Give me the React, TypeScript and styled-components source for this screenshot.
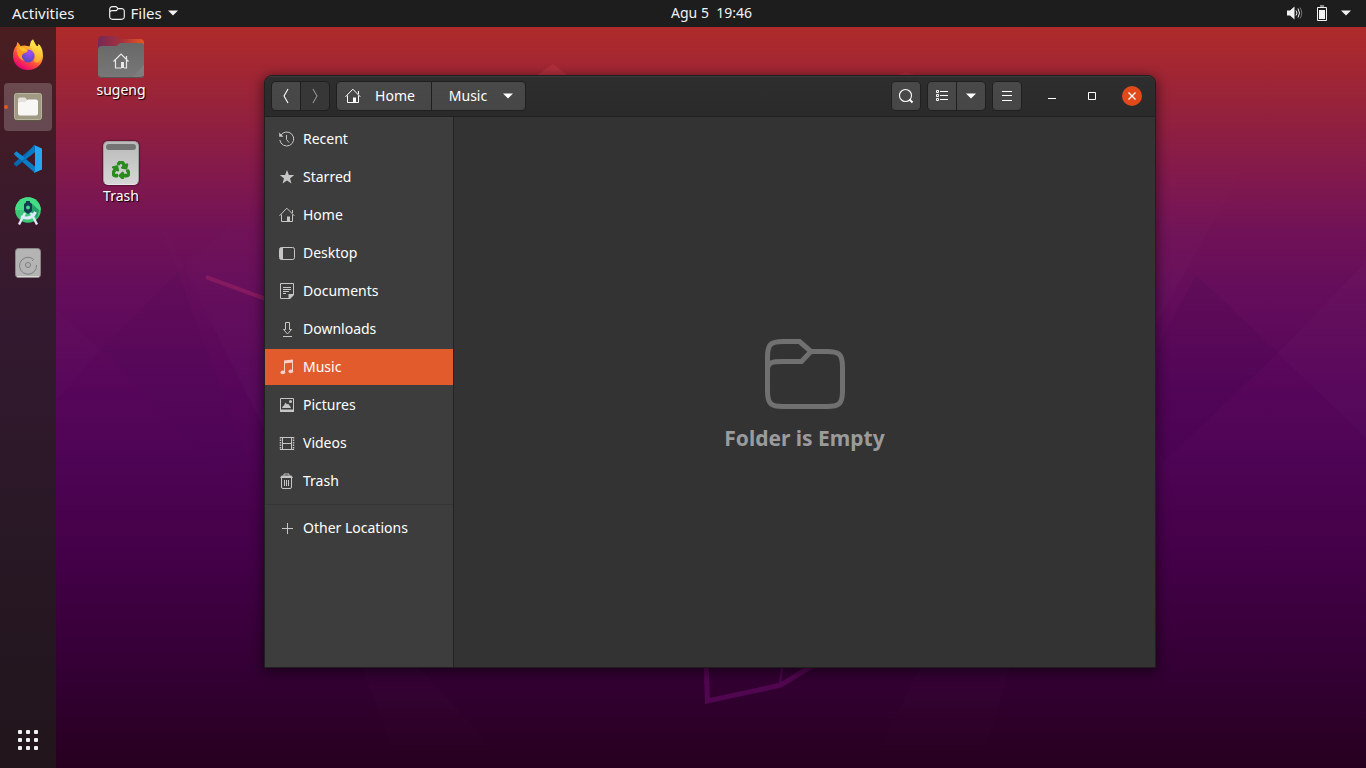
import React from 'react';
import styled, { createGlobalStyle, css } from 'styled-components';
import { FaRecycle } from 'react-icons/fa';

const GlobalStyle = createGlobalStyle`
  *, *::before, *::after { box-sizing: border-box; }
  body {
    margin: 0;
    font: 14px/20px "Noto Sans", "Open Sans", sans-serif;
    color: #fff;
    background: #2c001e;
  }
  button { font: inherit; color: inherit; border: 0; padding: 0; background: none; }
  ul { list-style: none; margin: 0; padding: 0; }
  a { color: inherit; text-decoration: none; }
  svg { display: block; flex: none; }
`;

const Screen = styled.div`
  position: relative;
  isolation: isolate;
  min-height: 100vh;
  display: flex;
  flex-direction: column;
`;

const WallpaperArt = styled.svg`
  position: absolute;
  inset: 0;
  width: 100%;
  height: 100%;
  z-index: -1;
`;

const TopBar = styled.header`
  display: grid;
  grid-template-columns: 1fr auto 1fr;
  align-items: center;
  height: 27px;
  padding: 0 15px 1px 12px;
  background: #1d1d1d;
  color: #f2f2f2;
`;

const BarGroup = styled.div<{ $end?: boolean }>`
  display: flex;
  align-items: center;
  gap: ${(p) => (p.$end ? '14px' : '34px')};
  justify-content: ${(p) => (p.$end ? 'flex-end' : 'flex-start')};
  font-size: 15px;
`;

const BarButton = styled.button`
  display: flex;
  align-items: center;
  gap: 6px;
`;

const Clock = styled(BarButton)`
  margin-left: 60px;
  white-space: pre;
`;

const Workspace = styled.div`
  flex: 1;
  display: flex;
`;

const Dock = styled.nav`
  display: flex;
  flex-direction: column;
  justify-content: space-between;
  flex: none;
  width: 56px;
  padding: 4px;
  background: linear-gradient(#4a1e20 0%, #3c1a2a 22%, #33192f 40%, #261723 75%, #21151b 100%);
`;

const DockList = styled.ul`
  display: flex;
  flex-direction: column;
  gap: 4px;
`;

const DockButton = styled.button<{ $active?: boolean }>`
  position: relative;
  display: grid;
  place-items: center;
  width: 48px;
  height: 48px;
  border-radius: 4px;
  background: ${(p) => (p.$active ? 'rgba(255, 255, 255, 0.2)' : 'transparent')};
`;

const RunningDot = styled.span`
  position: absolute;
  left: 0;
  top: 22px;
  width: 4px;
  height: 4px;
  border-radius: 50%;
  background: #e95420;
`;

const DesktopIcons = styled.ul`
  flex: none;
  width: 130px;
  padding-top: 6px;
`;

const DesktopItem = styled.li`
  display: flex;
  justify-content: center;
  align-items: flex-start;
  height: 106px;
`;

const DesktopButton = styled.button`
  display: flex;
  flex-direction: column;
  align-items: center;
  gap: 1px;
  text-shadow: 1px 1px 1px #000;
`;

const Window = styled.main`
  flex: 1;
  display: flex;
  flex-direction: column;
  min-width: 700px;
  margin: 48px 210px 100px 78px;
  border: 1px solid #1f1f1f;
  border-radius: 8px 8px 0 0;
  overflow: hidden;
  background: #333;
  box-shadow: 0 3px 12px 2px rgba(0, 0, 0, 0.45);
`;

const HeaderBar = styled.div`
  display: flex;
  align-items: center;
  height: 41px;
  padding: 0 13px 0 6px;
  border-bottom: 1px solid #202020;
  background: linear-gradient(#2e2e2e, #2a2a2a);
  box-shadow: inset 0 1px #3b3b3b;
`;

const Spacer = styled.div`
  flex: 1;
`;

const ButtonGroup = styled.div<{ $after?: number }>`
  display: flex;
  gap: 1px;
  height: 30px;
  margin-right: ${(p) => p.$after ?? 6}px;
  border: 1px solid #1f1f1f;
  border-radius: 5px;
  overflow: hidden;
  background: #1f1f1f;
`;

const ToolButton = styled.button`
  display: flex;
  align-items: center;
  justify-content: center;
  width: 28px;
  background: linear-gradient(#494949, #464646);
  &:disabled { background: #373737; color: #929292; }
`;

const PathButton = styled(ToolButton)<{ $current?: boolean }>`
  width: ${(p) => (p.$current ? '93px' : '94px')};
  gap: ${(p) => (p.$current ? '16px' : '14px')};
  ${(p) =>
    p.$current
      ? css`
          padding-left: 5px;
        `
      : css`
          padding-right: 8px;
        `}
`;

const WindowControl = styled.button<{ $close?: boolean }>`
  display: grid;
  place-items: center;
  width: 20px;
  height: 20px;
  margin-left: 20px;
  border-radius: 50%;
  background: ${(p) => (p.$close ? '#e2491a' : 'transparent')};
`;

const WindowBody = styled.div`
  flex: 1;
  display: flex;
`;

const Sidebar = styled.nav`
  flex: none;
  width: 189px;
  padding-top: 4px;
  border-right: 1px solid #232323;
  background: #3d3d3d;
`;

const Place = styled.a<{ $selected?: boolean }>`
  display: flex;
  align-items: center;
  gap: 8px;
  height: 36px;
  margin-bottom: 2px;
  padding-left: 14px;
  background: ${(p) => (p.$selected ? '#e25b2c' : 'transparent')};
  svg { color: ${(p) => (p.$selected ? '#f8d3c6' : '#c6c6c6')}; }
`;

const Divider = styled.hr`
  height: 1px;
  margin: 5px 0;
  border: 0;
  background: #353535;
`;

const EmptyState = styled.section`
  flex: 1;
  display: flex;
  flex-direction: column;
  align-items: center;
  justify-content: center;
  gap: 12px;
  padding-top: 8px;
  color: #707070;
`;

const EmptyTitle = styled.h1`
  margin: 0;
  font-size: 21px;
  line-height: 32px;
  font-weight: 700;
  color: #9b9b9b;
`;

/* ---------- symbolic icons, on a 16 unit grid ---------- */

const Glyph = ({ children }: { children: React.ReactNode }) => (
  <svg width="16" height="16" viewBox="0 0 16 16" fill="none" stroke="currentColor" aria-hidden="true">
    {children}
  </svg>
);

const FolderOutline = ({ width, height, stroke = 5 }: { width: number; height: number; stroke?: number }) => (
  <svg width={width} height={height} viewBox="0 0 80 72" fill="none" stroke="currentColor" strokeWidth={stroke} aria-hidden="true">
    <path d="M46 13.5H62C74 13.5 77.5 16 77.5 29V53C77.5 66 74 68.5 62 68.5H18C6 68.5 2.5 66 2.5 53V19C2.5 6 6 3.5 18 3.5H34.5L46 13.5L36.5 23.5H18C8 23.5 2.5 24 2.5 32" />
  </svg>
);

const Caret = () => (
  <svg width="10" height="6" viewBox="0 0 10 6" fill="currentColor" aria-hidden="true">
    <path d="M0 .5h10L5 5.5z" />
  </svg>
);

const HomeGlyph = () => (
  <Glyph>
    <path d="M.5 8.8L7.8 1.2L15.3 8.8M2.5 7.5V14.5H8M10.5 14.5H13.5V7.5M13.5 6V3" />
    <path d="M8 9.5h3V15H8z" fill="currentColor" stroke="none" />
  </Glyph>
);

const RecentGlyph = () => (
  <Glyph>
    <path d="M1.6 4.6A7 7 0 1 1 .8 9M7.5 4v4.5l2.5 3" />
    <path d="M.2 1.5v4.3h4.3z" fill="currentColor" stroke="none" />
  </Glyph>
);

const StarGlyph = () => (
  <Glyph>
    <path
      d="M8 1l1.9 4.900 5.300.2-4.200 3.300 1.500 5.200L8 11.600l-4.500 3 1.500-5.200L.8 6.100l5.300-.2z"
      fill="currentColor"
      stroke="none"
    />
  </Glyph>
);

const DesktopGlyph = () => (
  <Glyph>
    <rect x=".5" y="2.5" width="15" height="12" rx="1.8" />
    <path d="M1 3h3v11H1z" fill="currentColor" stroke="none" />
  </Glyph>
);

const DocumentGlyph = () => (
  <Glyph>
    <path d="M14.5 11V.5h-13v15H10M4 4.5h8M4 6.5h8M4 8.5h6M4 10.5h3" />
    <path d="M9.5 16v-5H15v1l-4 4z" fill="currentColor" stroke="none" />
  </Glyph>
);

const DownloadGlyph = () => (
  <Glyph>
    <path d="M6.5 1.5h4v7h2L8.5 13l-4-4.5h2zM4 15.5h9" />
  </Glyph>
);

const MusicGlyph = () => (
  <Glyph>
    <path d="M5.5 13V2.5M13.5 12V2" />
    <path d="M5 1.5L14 .5v3L5 4.5z" fill="currentColor" stroke="none" />
    <ellipse cx="3.8" cy="13.3" rx="2.3" ry="1.9" fill="currentColor" stroke="none" />
    <ellipse cx="11.8" cy="12.3" rx="2.3" ry="1.9" fill="currentColor" stroke="none" />
  </Glyph>
);

const PictureGlyph = () => (
  <Glyph>
    <path d="M1.5 1.5h13v12.5h-13z" />
    <path d="M1 12.5h14V15H1zM3 11l1-2 1-.5L6.5 5.5 8 7.5l1-.8L11 9l1 2z" fill="currentColor" stroke="none" />
    <circle cx="11.5" cy="4.5" r="1.5" fill="currentColor" stroke="none" />
  </Glyph>
);

const VideoGlyph = () => (
  <Glyph>
    <path d="M3.5 2v13M12.5 2v13M1 2.5h14M3 8.5h10M1 14.5h14" />
    <path d="M1.5 2v13M14.5 2v13" strokeDasharray="1.5 1" strokeWidth="1.5" />
  </Glyph>
);

const TrashGlyph = () => (
  <Glyph>
    <path d="M2.5 4.5V14q0 1.5 1.5 1.5h7q1.5 0 1.5-1.5V4.5M5.5 7v6M7.5 7v6M9.5 7v6M5 2.5V1h5v1.5" />
    <path d="M1 5l1.5-2.5h10L14 5z" fill="currentColor" stroke="none" />
  </Glyph>
);

const PlusGlyph = () => (
  <Glyph>
    <path d="M3 8.5h11M8.5 3v11" />
  </Glyph>
);

const ChevronGlyph = ({ right }: { right?: boolean }) => (
  <Glyph>
    <path d={right ? 'M6 1l4 7-4 7' : 'M10 1L6 8l4 7'} strokeWidth="1.1" />
  </Glyph>
);

const SearchGlyph = () => (
  <Glyph>
    <circle cx="7.5" cy="7.5" r="6" strokeWidth="1.1" />
    <path d="M11.5 11.5l3 3" strokeWidth="2" />
  </Glyph>
);

const ListGlyph = () => (
  <Glyph>
    <path d="M2.5 2.5h2v2h-2zM2.5 6.5h2v2h-2zM2.5 10.5h2v2h-2zM6 3.5h8M6 7.5h8M6 11.5h8" />
  </Glyph>
);

const MenuGlyph = () => (
  <Glyph>
    <path d="M3 3.5h10M3 7.5h10M3 12.5h10" />
  </Glyph>
);

const VolumeIcon = () => (
  <Glyph>
    <path d="M0 5.5h3L7.5 1.5v13L3 10.5H0z" fill="currentColor" stroke="none" />
    <path d="M9 5.5q2 2.5 0 5M11 3.5q3 4.5 0 9" />
    <path d="M13 2.5q3.5 5.5 0 11" opacity=".4" />
  </Glyph>
);

const BatteryIcon = () => (
  <svg width="10" height="16" viewBox="0 0 10 16" fill="none" stroke="currentColor" aria-hidden="true">
    <path d="M.5 2.5h9v13h-9zM3 1h4" />
    <path d="M2 5h6v9H2z" fill="currentColor" stroke="none" />
  </svg>
);

/* ---------- application icons ---------- */

const FirefoxIcon = () => (
  <svg width="32" height="32" viewBox="0 0 32 32" aria-hidden="true">
    <defs>
      <linearGradient id="ffBody" x1=".8" y1=".1" x2=".25" y2=".95">
        <stop offset="0" stopColor="#fff44f" />
        <stop offset=".35" stopColor="#ffa52b" />
        <stop offset=".65" stopColor="#ff4a3d" />
        <stop offset="1" stopColor="#e60078" />
      </linearGradient>
      <radialGradient id="ffGlobe" cx=".6" cy=".25" r=".8">
        <stop offset="0" stopColor="#a44cf5" />
        <stop offset="1" stopColor="#4b4bbd" />
      </radialGradient>
      <linearGradient id="ffTail" x1="0" y1="0" x2="0" y2="1">
        <stop offset="0" stopColor="#fff04a" />
        <stop offset="1" stopColor="#ffb52e" />
      </linearGradient>
    </defs>
    <path
      d="M4.5 6.5L5.5 3l3 4 4-.5 5 1 1.5-5.5L21 1l3 5.5 2 1 .5-2.5C30 8 31 12.5 31 17c0 8-6.5 14-15 14S1 25 1 17c0-4 1-8 3.5-10.5z"
      fill="url(#ffBody)"
    />
    <path d="M18 8l1.5-6L21 0l3 6.5 2 1 .5-2.5C31 10 31 18 28 22c-2 2.5-5 2-6 0 2-5 1-9-4-14z" fill="url(#ffTail)" opacity=".75" />
    <circle cx="16" cy="17" r="6.5" fill="url(#ffGlobe)" />
    <path d="M4.5 8L6 4l3 4c3-1 4 1 6 2l1 2c-1 2-3 1.5-5 3-2 2-1 5 2 7-5-1-8-5-8-10z" fill="#ff9a22" />
    <path d="M7 8.5c4-1.5 6 .5 8.5 2.5-1 2-3 1-5 1.5z" fill="#ffbf2f" />
  </svg>
);

const FilesIcon = () => (
  <svg width="30" height="30" viewBox="0 0 30 30" aria-hidden="true">
    <rect x=".5" y=".5" width="29" height="29" rx="3" fill="#5d5348" />
    <rect x="1.5" y="1.5" width="27" height="26" rx="2" fill="#a09a85" stroke="#b9b49f" />
    <path d="M5 11V7.5Q5 5.5 7 5.5h5l3 3h5V14H5z" fill="#e3e0d9" />
    <path d="M5 12q0-2 2-2h5.500l2.500-2.500h8q2 0 2 2v12q0 2-2 2H7q-2 0-2-2z" fill="#f8f7f5" />
  </svg>
);

const CodeIcon = () => (
  <svg width="30" height="30" viewBox="0 0 30 30" aria-hidden="true">
    <path d="M1 9.5L3.5 7.5 22 22.5V29L1.5 11z" fill="#0b7dc4" />
    <path d="M1 20.5L3.5 22.5 22 8V1L1 19z" fill="#0668ae" />
    <path d="M1 9.5l2.5-2L12 14l-3 3z" fill="#1389d4" />
    <path d="M9 17L21 1l1 7-9 7z" fill="#0a79c1" />
    <path d="M21 1l8 3.5v21L21 29l1-2V3z" fill="#25a5f4" />
  </svg>
);

const StudioIcon = () => (
  <svg width="28" height="30" viewBox="0 0 28 30" aria-hidden="true">
    <circle cx="14" cy="14" r="12.8" fill="#3cc877" />
    <path d="M1.2 14A12.8 12.8 0 0 1 26.8 14z" fill="#45dc86" />
    <path d="M17 7l8 7-2 8-7-7z" fill="#259c67" />
    <path d="M11 17L5 28.5M17 17L23 28.5" stroke="#dfe9fb" strokeWidth="2.4" fill="none" />
    <path d="M7 20.5Q17 25 21.5 16" stroke="#dfe9fb" strokeWidth="3" fill="none" />
    <path d="M12 5h4v1.5l2 1.5v7l-4 3-4-3V8l2-1.5z" fill="#123c52" />
    <circle cx="14" cy="11.5" r="1.9" fill="#45dc86" />
  </svg>
);

const DiskIcon = () => (
  <svg width="26" height="30" viewBox="0 0 26 30" aria-hidden="true">
    <rect x=".5" y=".5" width="25" height="29" rx="3" fill="#b4b4b4" stroke="#8b8585" />
    <path d="M2 28.5h22" stroke="#d8d8d8" />
    <g fill="none" stroke="#7f7f7f">
      <path d="M18.5 11.5L17 13M17.5 10.5A8.5 8.5 0 1 0 21.5 17M18.5 11.5L17.5 10.5" />
      <circle cx="13" cy="17" r="2.5" />
    </g>
  </svg>
);

const AppsIcon = () => (
  <svg width="20" height="20" viewBox="0 0 20 20" fill="#f2f2f2" aria-hidden="true">
    {[0, 8, 16].map((y) => [0, 8, 16].map((x) => <rect key={`${x}-${y}`} x={x} y={y} width="4" height="4" rx="1" />))}
  </svg>
);

const HomeFolderIcon = () => (
  <svg width="48" height="46" viewBox="0 0 48 46" aria-hidden="true">
    <defs>
      <linearGradient id="tab" x1="0" y1="0" x2="1" y2="0">
        <stop offset="0" stopColor="#772953" />
        <stop offset=".5" stopColor="#a3303f" />
        <stop offset="1" stopColor="#e9551f" />
      </linearGradient>
      <linearGradient id="front" x1="0" y1="0" x2="0" y2="1">
        <stop offset="0" stopColor="#686868" />
        <stop offset="1" stopColor="#787878" />
      </linearGradient>
    </defs>
    <path d="M1 18V7q0-4 4-4h12q2 0 3.5 1.5L22.5 6H43q4 0 4 4v8z" fill="url(#tab)" />
    <path d="M1 17q0-4 4-4h13q2 0 3-1.5T24 10h20q3 0 3 3v28q0 4-4 4H5q-4 0-4-4z" fill="url(#front)" />
    <path d="M35 44.5L47 32v9q0 3.5-3.5 3.5z" fill="#7e7e7e" />
    <path d="M2 43q1 1.500 3 1.500h38q2 0 3-1.500" stroke="#555" fill="none" />
    <path d="M16.5 28.500L24 21l7.500 7.500M18.500 27v8h6M27 35h2.500v-8M29.500 26v-3" stroke="#e8e8e8" strokeWidth="1.2" fill="none" />
    <path d="M24 29h3v6h-3z" fill="#e8e8e8" />
  </svg>
);

const TrashBin = styled.div`
  display: grid;
  place-items: end center;
  width: 36px;
  height: 44px;
  margin-top: 2px;
  padding-bottom: 5px;
  border-radius: 5px;
  border: 1px solid #a5a0a0;
  border-bottom-color: #e5e5e5;
  background: linear-gradient(#bababa, #d6d6d6);
  box-shadow: 0 0 1px 1px rgba(0, 0, 0, 0.3);
  color: #2b8a1e;
`;

const BinSlot = styled.span`
  width: 30px;
  height: 6px;
  margin-top: 2px;
  align-self: start;
  border-radius: 3px;
  background: #747474;
`;

const Wallpaper = () => (
  <WallpaperArt viewBox="0 0 1366 768" preserveAspectRatio="none" aria-hidden="true">
    <defs>
      <linearGradient id="sky" x1="0" y1="0" x2="0" y2="1">
        <stop offset=".035" stopColor="#af2b2a" />
        <stop offset=".13" stopColor="#982339" />
        <stop offset=".22" stopColor="#841a4b" />
        <stop offset=".3" stopColor="#711257" />
        <stop offset=".38" stopColor="#640d5b" />
        <stop offset=".5" stopColor="#57065a" />
        <stop offset=".6" stopColor="#4e0454" />
        <stop offset=".74" stopColor="#420046" />
        <stop offset=".88" stopColor="#330033" />
        <stop offset="1" stopColor="#27001f" />
      </linearGradient>
      <linearGradient id="fadeUp" x1="0" y1="1" x2="0" y2="0">
        <stop offset="0" stopColor="#fff" stopOpacity=".02" />
        <stop offset="1" stopColor="#fff" stopOpacity="0" />
      </linearGradient>
      <linearGradient id="fadeDown" x1="0" y1="0" x2="0" y2="1">
        <stop offset="0" stopColor="#20003a" stopOpacity=".07" />
        <stop offset="1" stopColor="#20003a" stopOpacity="0" />
      </linearGradient>
      <linearGradient id="glowDown" x1="0" y1="0" x2="0" y2="1">
        <stop offset="0" stopColor="#fff" stopOpacity=".012" />
        <stop offset="1" stopColor="#fff" stopOpacity="0" />
      </linearGradient>
    </defs>
    <rect width="1366" height="768" fill="url(#sky)" />
    <path d="M1140 353L1253 150H1140z" fill="url(#fadeUp)" />
    <path d="M1278 353L1366 262V438z" fill="#fff" opacity=".015" />
    <path d="M1196 275L1278 353L1163 462L1140 380z" fill="#20003a" opacity=".07" />
    <path d="M145 190L178 272L270 190V440z" fill="url(#fadeUp)" />
    <path d="M56 310L100 350L56 400z" fill="#fff" opacity=".012" />
    <path d="M178 272L100 350L270 520z" fill="url(#fadeDown)" />
    <path d="M362 668L400 768H510L420 668z" fill="url(#glowDown)" />
    <path d="M920 668L870 768H980L1010 668z" fill="url(#glowDown)" />
    <path d="M536 76L553 64L568 76z" fill="#c03545" opacity=".5" />
    <path d="M894 76L906 72L918 76z" fill="#c03545" opacity=".4" />
    <path d="M206 277L266 299" stroke="#861a60" strokeWidth="4" />
    <path d="M706 660L707.5 701L781 685L820 661" stroke="#510750" strokeWidth="5" fill="none" />
    <path d="M783 660L780 684" stroke="#510750" strokeWidth="2" />
  </WallpaperArt>
);

const dockApps = [
  { name: 'Firefox', Icon: FirefoxIcon },
  { name: 'Files', Icon: FilesIcon, active: true },
  { name: 'Visual Studio Code', Icon: CodeIcon },
  { name: 'Android Studio', Icon: StudioIcon },
  { name: 'Disk', Icon: DiskIcon },
];

const places = [
  { name: 'Recent', Icon: RecentGlyph },
  { name: 'Starred', Icon: StarGlyph },
  { name: 'Home', Icon: HomeGlyph },
  { name: 'Desktop', Icon: DesktopGlyph },
  { name: 'Documents', Icon: DocumentGlyph },
  { name: 'Downloads', Icon: DownloadGlyph },
  { name: 'Music', Icon: MusicGlyph },
  { name: 'Pictures', Icon: PictureGlyph },
  { name: 'Videos', Icon: VideoGlyph },
  { name: 'Trash', Icon: TrashGlyph },
];

export default function App() {
  return (
    <Screen>
      <GlobalStyle />
      <Wallpaper />
      <TopBar>
        <BarGroup>
          <BarButton>Activities</BarButton>
          <BarButton>
            <FolderOutline width={16} height={14} stroke={6} />
            Files
            <Caret />
          </BarButton>
        </BarGroup>
        <Clock>{'Agu 5  19:46'}</Clock>
        <BarGroup $end>
          <VolumeIcon />
          <BatteryIcon />
          <Caret />
        </BarGroup>
      </TopBar>
      <Workspace>
        <Dock aria-label="Dock">
          <DockList>
            {dockApps.map(({ name, Icon, active }) => (
              <li key={name}>
                <DockButton $active={active} aria-label={name}>
                  {active && <RunningDot />}
                  <Icon />
                </DockButton>
              </li>
            ))}
          </DockList>
          <DockButton aria-label="Show applications">
            <AppsIcon />
          </DockButton>
        </Dock>
        <DesktopIcons>
          <DesktopItem>
            <DesktopButton>
              <HomeFolderIcon />
              sugeng
            </DesktopButton>
          </DesktopItem>
          <DesktopItem>
            <DesktopButton>
              <TrashBin>
                <BinSlot />
                <FaRecycle size={18} strokeWidth={36} stroke="currentColor" />
              </TrashBin>
              Trash
            </DesktopButton>
          </DesktopItem>
        </DesktopIcons>
        <Window>
          <HeaderBar>
            <ButtonGroup>
              <ToolButton aria-label="Back">
                <ChevronGlyph />
              </ToolButton>
              <ToolButton aria-label="Forward" disabled>
                <ChevronGlyph right />
              </ToolButton>
            </ButtonGroup>
            <ButtonGroup>
              <PathButton>
                <HomeGlyph />
                Home
              </PathButton>
              <PathButton $current>
                Music
                <Caret />
              </PathButton>
            </ButtonGroup>
            <Spacer />
            <ButtonGroup>
              <ToolButton aria-label="Search">
                <SearchGlyph />
              </ToolButton>
            </ButtonGroup>
            <ButtonGroup>
              <ToolButton aria-label="List view">
                <ListGlyph />
              </ToolButton>
              <ToolButton aria-label="View options">
                <Caret />
              </ToolButton>
            </ButtonGroup>
            <ButtonGroup $after={0}>
              <ToolButton aria-label="Menu">
                <MenuGlyph />
              </ToolButton>
            </ButtonGroup>
            <WindowControl aria-label="Minimize">
              <Glyph>
                <path d="M4 10.5h8" />
              </Glyph>
            </WindowControl>
            <WindowControl aria-label="Maximize">
              <Glyph>
                <path d="M4.5 4.5h7v7h-7z" />
              </Glyph>
            </WindowControl>
            <WindowControl $close aria-label="Close">
              <Glyph>
                <path d="M4.5 4.5l7 7M11.5 4.5l-7 7" strokeWidth="1.3" />
              </Glyph>
            </WindowControl>
          </HeaderBar>
          <WindowBody>
            <Sidebar aria-label="Places">
              <ul>
                {places.map(({ name, Icon }) => (
                  <li key={name}>
                    <Place href="#" $selected={name === 'Music'}>
                      <Icon />
                      {name}
                    </Place>
                  </li>
                ))}
              </ul>
              <Divider />
              <Place href="#">
                <PlusGlyph />
                Other Locations
              </Place>
            </Sidebar>
            <EmptyState>
              <FolderOutline width={80} height={72} />
              <EmptyTitle>Folder is Empty</EmptyTitle>
            </EmptyState>
          </WindowBody>
        </Window>
      </Workspace>
    </Screen>
  );
}
